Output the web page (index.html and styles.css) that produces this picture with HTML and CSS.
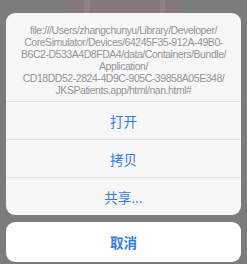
FILE: index.html
```html
<!DOCTYPE html>
<html>
	<head>
		<meta charset="utf-8" />
		<title>操作</title>
		<link rel="stylesheet" href="styles.css">
	</head>
	<body>
		<div class="sheet">
			<div class="group">
				<div class="message">
					file:///Users/zhangchunyu/Library/Developer/<br>
					CoreSimulator/Devices/64245F35-912A-49B0-<br>
					B6C2-D533A4D8FDA4/data/Containers/Bundle/<br>
					Application/<br>
					CD18DD52-2824-4D9C-905C-39858A05E348/<br>
					JKSPatients.app/html/nan.html#
				</div>
				<div class="action">打开</div>
				<div class="action">拷贝</div>
				<div class="action">共享...</div>
			</div>
			<div class="group cancel">
				<div class="action">取消</div>
			</div>
		</div>
	</body>
</html>
```

FILE: styles.css
```css
*{
	padding: 0;
	margin: 0;
	box-sizing: border-box;
}
html, body{
	height: 100%;
}
body{
	background-color: #7c7c7c;
	background-image:
		linear-gradient(90deg,
			transparent 67px, #85797a 67px,
			#85797a 84px, #8d8483 84px, #8d8483 90px,
			#85797a 90px, #85797a 160px,
			#8d8483 160px, #8d8483 165px,
			#85797a 165px, #85797a 178px, transparent 178px);
	background-repeat: no-repeat;
	background-size: 100% 13px;
	font-family: "Liberation Sans", "Noto Sans CJK SC", sans-serif;
	overflow: hidden;
}
.sheet{
	padding: 13px 6px 0;
	display: flex;
	flex-direction: column;
	gap: 7px;
}
.group{
	background-color: #f7f7f7;
	border-radius: 9px;
	overflow: hidden;
}
.message{
	height: 88px;
	padding-top: 11px;
	text-align: center;
	font-size: 10.5px;
	line-height: 12px;
	letter-spacing: -0.45px;
	color: #959595;
	white-space: nowrap;
}
.action{
	height: 38px;
	border-top: 1px solid #e1e1e1;
	display: flex;
	align-items: center;
	justify-content: center;
	font-family: "Noto Sans CJK SC", sans-serif;
	font-size: 13.5px;
	color: #2f7bf5;
}
.cancel{
	background-color: #ffffff;
}
.cancel .action{
	height: 40px;
	border-top: none;
	font-weight: bold;
}
```
